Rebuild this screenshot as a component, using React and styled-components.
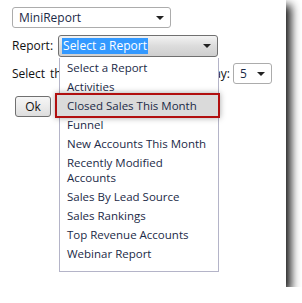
import styled, { createGlobalStyle } from 'styled-components';

const GlobalStyle = createGlobalStyle`
  body {
    margin: 0;
    background: #fff;
    font-family: "Open Sans", "Noto Sans", sans-serif;
    font-size: 11.5px;
    color: #111;
  }
`;

const reports = [
  'Select a Report',
  'Activities',
  'Closed Sales This Month',
  'Funnel',
  'New Accounts This Month',
  'Recently Modified\nAccounts',
  'Sales By Lead Source',
  'Sales Rankings',
  'Top Revenue Accounts',
  'Webinar Report',
];

const Panel = styled.div`
  position: relative;
  width: 286px;
  height: 287px;
  box-sizing: border-box;
  padding: 7px 0 0 12px;
  background: #fff;
  box-shadow: 5px 5px 9px rgba(0, 0, 0, 0.9);
  display: flex;
  flex-direction: column;
`;

const Row = styled.div`
  display: flex;
  align-items: center;
  gap: ${(p) => p.$gap || 0}px;
  margin-top: ${(p) => p.$top || 0}px;
`;

const Label = styled.span`
  white-space: nowrap;
  line-height: 16px;
  font-size: 12px;
  ${(p) =>
    p.$w &&
    `
    width: ${p.$w}px;
    flex: none;
    text-align-last: justify;
  `}
`;

const Select = styled.div`
  position: relative;
  box-sizing: border-box;
  width: ${(p) => p.$w}px;
  height: ${(p) => p.$h || 21}px;
  border: 1px solid ${(p) => (p.$open ? '#707070' : '#acacac')};
  border-radius: 3px;
  background: ${(p) =>
    p.$open ? 'linear-gradient(#f3f3f3, #dcdcdc 50%, #cfcfcf)' : '#fff'};
  display: flex;
  align-items: center;
  padding-left: ${(p) => (p.$open ? 3 : 5)}px;
  font-size: 12px;
`;

const Value = styled.span`
  line-height: 16px;
  padding: 0 1px;
  background: ${(p) => (p.$selected ? '#3399ff' : 'transparent')};
  color: ${(p) => (p.$selected ? '#fff' : '#1b2a47')};
`;

const Arrow = styled.span`
  position: absolute;
  right: ${(p) => p.$right || 7}px;
  top: 50%;
  margin-top: -2px;
  width: 0;
  height: 0;
  border-left: 4px solid transparent;
  border-right: 4px solid transparent;
  border-top: 4px solid #222;
`;

const Button = styled.button`
  margin-left: 3px;
  width: 36px;
  height: 21px;
  border: 1px solid #707070;
  border-radius: 3px;
  background: linear-gradient(#f6f6f6, #ebebeb 50%, #dddddd);
  font: inherit;
  font-size: 12px;
  color: #111;
  padding: 0;
`;

const List = styled.ul`
  position: absolute;
  left: 59px;
  top: 58px;
  width: 160px;
  box-sizing: border-box;
  margin: 0;
  padding: 0 0 8px;
  list-style: none;
  background: #fff;
  border: 1px solid #b4b4c8;
  border-top: none;
`;

const Item = styled.li`
  position: relative;
  z-index: 1;
  padding: 2px 4px 2px 7px;
  line-height: 15px;
  white-space: pre-line;
  color: #1b2a47;

  ${(p) =>
    p.$marked &&
    `
    &::before {
      content: '';
      position: absolute;
      z-index: -1;
      top: -3px;
      bottom: -3px;
      left: -5px;
      right: -2px;
      background: #dadada;
      border: 2px solid #b10f0f;
      box-shadow: 0 0 6px rgba(0, 0, 0, 0.35);
    }
  `}
`;

export default function App() {
  return (
    <>
      <GlobalStyle />
      <Panel>
        <Row>
          <Select $w={159}>
            <Value>MiniReport</Value>
            <Arrow $right={6} />
          </Select>
        </Row>
        <Row $gap={5} $top={7}>
          <Label>Report:</Label>
          <Select $w={160} $h={22} $open>
            <Value $selected>Select a Report</Value>
            <Arrow $right={6} />
          </Select>
        </Row>
        <Row $gap={3} $top={6}>
          <Label $w={218}>Select the number of rows to display:</Label>
          <Select $w={39}>
            <Value>5</Value>
            <Arrow $right={6} />
          </Select>
        </Row>
        <Row $top={12}>
          <Button>Ok</Button>
        </Row>
        <List>
          {reports.map((r) => (
            <Item key={r} $marked={r === 'Closed Sales This Month'}>
              {r}
            </Item>
          ))}
        </List>
      </Panel>
    </>
  );
}
